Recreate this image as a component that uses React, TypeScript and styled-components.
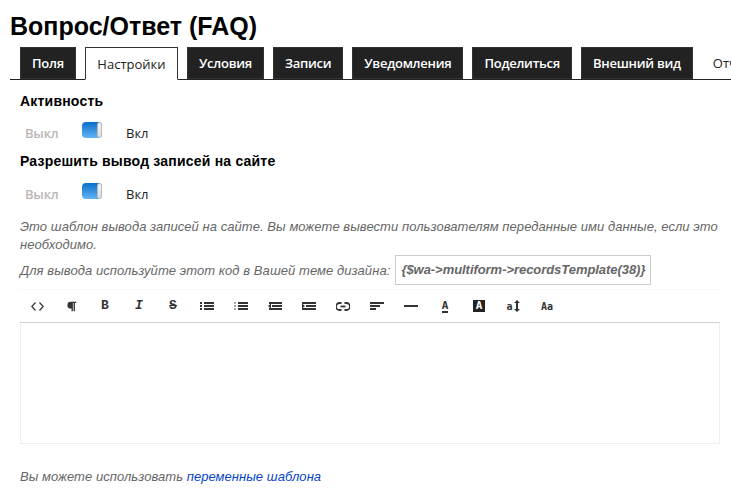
import React, { FC } from 'react';
import styled, { createGlobalStyle } from 'styled-components';
import { FaParagraph } from 'react-icons/fa';

const GlobalStyle = createGlobalStyle`
  html, body {
    margin: 0;
    padding: 0;
    background: #fff;
    overflow: hidden;
  }
  body {
    font-family: "Liberation Sans", Arial, sans-serif;
    color: #000;
  }
`;

const tabs = ['Поля', 'Настройки', 'Условия', 'Записи', 'Уведомления', 'Поделиться', 'Внешний вид'];

const Line: FC<{ x: number; y: number; w: number; h?: number }> = ({ x, y, w, h = 2 }) => (
  <rect x={x} y={y} width={w} height={h} />
);

const ListUlIcon = () => (
  <svg width="14" height="8" viewBox="0 0 14 8" fill="#333">
    <Line x={0} y={0} w={2} />
    <Line x={0} y={3} w={2} />
    <Line x={0} y={6} w={2} />
    <Line x={4} y={0} w={10} />
    <Line x={4} y={3} w={10} />
    <Line x={4} y={6} w={10} />
  </svg>
);

const ListOlIcon = () => (
  <svg width="14" height="8" viewBox="0 0 14 8" fill="#333">
    <rect x="0" y="0" width="2" height="2" fill="#aaa" />
    <rect x="0" y="3" width="2" height="2" fill="#aaa" />
    <rect x="0" y="6" width="2" height="2" fill="#aaa" />
    <Line x={4} y={0} w={10} />
    <Line x={4} y={3} w={10} />
    <Line x={4} y={6} w={10} />
  </svg>
);

const OutdentIcon = () => (
  <svg width="14" height="8" viewBox="0 0 14 8" fill="#333">
    <Line x={1} y={0} w={13} />
    <path d="M0 4l3-2.500v5z" />
    <Line x={4} y={3} w={10} />
    <Line x={1} y={6} w={13} />
  </svg>
);

const IndentIcon = () => (
  <svg width="14" height="8" viewBox="0 0 14 8" fill="#333">
    <Line x={0} y={0} w={14} />
    <path d="M3 4L0 1.500v5z" />
    <Line x={4} y={3} w={10} />
    <Line x={0} y={6} w={14} />
  </svg>
);

const LinkIcon = () => (
  <svg width="14" height="9" viewBox="0 0 14 9" fill="none" stroke="#333" strokeWidth="1.8">
    <path d="M5.500 1H3.500a3.500 3.500 0 0 0 0 7h2" />
    <path d="M8.500 1h2a3.500 3.500 0 0 1 0 7h-2" />
    <path d="M4.500 4.500h5" />
  </svg>
);

const AlignIcon = () => (
  <svg width="14" height="8" viewBox="0 0 14 8" fill="#333">
    <Line x={0} y={0} w={14} />
    <Line x={0} y={3} w={10} />
    <Line x={0} y={6} w={6} />
  </svg>
);

const RuleIcon = () => (
  <svg width="14" height="2" viewBox="0 0 14 2" fill="#333">
    <Line x={0} y={0} w={14} />
  </svg>
);

const CodeIcon = () => (
  <svg width="13" height="9" viewBox="0 0 13 9" fill="none" stroke="#333" strokeWidth="1.2">
    <path d="M4.500 0.500L0.800 4.500l3.700 4" />
    <path d="M8.500 0.500l3.700 4-3.700 4" />
  </svg>
);

const SizeArrow = () => (
  <svg width="6" height="12" viewBox="0 0 6 12" fill="#333">
    <path d="M3 0l3 3H4v6h2l-3 3-3-3h2V3H0z" />
  </svg>
);

export default function App() {
  return (
    <>
      <GlobalStyle />
      <SPage>
        <STitle>Вопрос/Ответ (FAQ)</STitle>
        <STabBar>
          {tabs.map((tab, i) => (
            <STab key={tab} $active={i === 1}>
              {tab}
            </STab>
          ))}
          <SPlainTab>Отчеты</SPlainTab>
        </STabBar>
        <SContent>
          <SHeading $top={13}>Активность</SHeading>
          <SToggleRow $top={13}>
            <SOff>Выкл</SOff>
            <SToggle />
            <SOn>Вкл</SOn>
          </SToggleRow>
          <SHeading $top={15}>Разрешить вывод записей на сайте</SHeading>
          <SToggleRow $top={14}>
            <SOff>Выкл</SOff>
            <SToggle />
            <SOn>Вкл</SOn>
          </SToggleRow>
          <SHint>
            Это шаблон вывода записей на сайте. Вы можете вывести пользователям переданные ими данные, если это
            необходимо.
          </SHint>
          <SCodeRow>
            Для вывода используйте этот код в Вашей теме дизайна:
            <SCode>{'{$wa->multiform->recordsTemplate(38)}'}</SCode>
          </SCodeRow>
          <SToolbar>
            <SToolButton><CodeIcon /></SToolButton>
            <SToolButton><FaParagraph size={11} color="#333" /></SToolButton>
            <SToolButton><SLetter>B</SLetter></SToolButton>
            <SToolButton><SLetter $italic>I</SLetter></SToolButton>
            <SToolButton><SLetter $strike>S</SLetter></SToolButton>
            <SToolButton><ListUlIcon /></SToolButton>
            <SToolButton><ListOlIcon /></SToolButton>
            <SToolButton><OutdentIcon /></SToolButton>
            <SToolButton><IndentIcon /></SToolButton>
            <SToolButton><LinkIcon /></SToolButton>
            <SToolButton><AlignIcon /></SToolButton>
            <SToolButton><RuleIcon /></SToolButton>
            <SToolButton><SUnderlined>A</SUnderlined></SToolButton>
            <SToolButton><SInverse>A</SInverse></SToolButton>
            <SToolButton><SSmall>a</SSmall><SizeArrow /></SToolButton>
            <SToolButton><SSmall>Aa</SSmall></SToolButton>
          </SToolbar>
          <SEditor />
          <SFooter>
            Вы можете использовать <SLink href="#">переменные шаблона</SLink>
          </SFooter>
        </SContent>
      </SPage>
    </>
  );
}

const SPage = styled.div`
  width: 731px;
  height: 490px;
  overflow: hidden;
  padding: 12px 0 0 10px;
  box-sizing: border-box;
`;

const STitle = styled.h1`
  margin: 0;
  font-size: 25px;
  line-height: 28px;
  font-weight: bold;
`;

const STabBar = styled.div`
  display: flex;
  gap: 9px;
  height: 33px;
  margin-top: 7px;
  padding-left: 10px;
  border-bottom: 1px solid #222;
  box-sizing: border-box;
  white-space: nowrap;
`;

const STab = styled.div<{ $active?: boolean }>`
  display: flex;
  align-items: center;
  height: ${({ $active }) => ($active ? '33px' : '32px')};
  padding: 0 ${({ $active }) => ($active ? '11.5px' : '11px')};
  box-sizing: border-box;
  font-family: "Open Sans", sans-serif;
  font-size: 13px;
  font-weight: ${({ $active }) => ($active ? 400 : 600)};
  letter-spacing: ${({ $active }) => ($active ? '0' : '-0.26px')};
  color: ${({ $active }) => ($active ? '#222' : '#fff')};
  background: ${({ $active }) => ($active ? '#fff' : '#222')};
  border: 1px solid #333;
  border-bottom: ${({ $active }) => ($active ? '1px solid #fff' : '1px solid #333')};
`;

const SPlainTab = styled.div`
  display: flex;
  align-items: center;
  height: 32px;
  padding-left: 11px;
  font-family: "Open Sans", sans-serif;
  font-size: 13px;
  color: #222;
`;

const SContent = styled.div`
  width: 700px;
  margin-left: 10px;
`;

const SHeading = styled.div<{ $top: number }>`
  margin-top: ${({ $top }) => $top}px;
  font-size: 14px;
  line-height: 16px;
  font-weight: bold;
  letter-spacing: 0.2px;
`;

const SToggleRow = styled.div<{ $top: number }>`
  display: flex;
  align-items: flex-start;
  height: 16px;
  margin-top: ${({ $top }) => $top}px;
  padding-left: 5px;
  font-family: "Open Sans", sans-serif;
  font-size: 13px;
  line-height: 16px;
`;

const SOff = styled.span`
  width: 57px;
  padding-top: 3px;
  font-weight: 600;
  letter-spacing: -0.2px;
  color: #bbb6b6;
`;

const SOn = styled.span`
  margin-left: 24px;
  padding-top: 3px;
  color: #222;
`;

const SToggle = styled.div`
  position: relative;
  width: 20px;
  height: 16px;
  border-radius: 4px;
  background: linear-gradient(#0a6fcb, #63b3f5);
  &::after {
    content: '';
    position: absolute;
    top: 0;
    right: 0;
    width: 3px;
    height: 14px;
    border: 1px solid #bbb;
    border-radius: 3px;
    background: linear-gradient(#f4f4f4, #ddd);
  }
`;

const SHint = styled.div`
  margin-top: 19px;
  font-size: 13px;
  line-height: 18px;
  font-style: italic;
  letter-spacing: 0.06px;
  color: #666;
`;

const SCodeRow = styled.div`
  display: flex;
  align-items: center;
  gap: 5px;
  margin-top: 1px;
  font-size: 13px;
  font-style: italic;
  letter-spacing: 0.07px;
  color: #666;
`;

const SCode = styled.span`
  display: block;
  padding: 0 5px;
  height: 30px;
  line-height: 28px;
  box-sizing: border-box;
  border: 1px solid #ccc;
  font-weight: bold;
  letter-spacing: -0.05px;
`;

const SToolbar = styled.div`
  display: flex;
  align-items: center;
  height: 34px;
  margin-top: 4px;
  border-top: 1px solid #f8f8f8;
  border-bottom: 1px solid #d4d4d4;
  box-sizing: border-box;
`;

const SToolButton = styled.div`
  display: flex;
  align-items: center;
  justify-content: center;
  flex: none;
  width: 34px;
  gap: 1px;
`;

const SLetter = styled.span<{ $italic?: boolean; $strike?: boolean }>`
  font-family: "Liberation Mono", monospace;
  font-size: 13px;
  font-weight: bold;
  line-height: 14px;
  color: #333;
  font-style: ${({ $italic }) => ($italic ? 'italic' : 'normal')};
  text-decoration: ${({ $strike }) => ($strike ? 'line-through' : 'none')};
`;

const SUnderlined = styled.span`
  font-family: "DejaVu Sans Mono", monospace;
  font-size: 11px;
  font-weight: bold;
  line-height: 11px;
  color: #333;
  border-bottom: 2px solid #333;
`;

const SInverse = styled.span`
  display: block;
  width: 12px;
  height: 12px;
  line-height: 12px;
  text-align: center;
  background: #222;
  color: #fff;
  font-family: "DejaVu Sans Mono", monospace;
  font-size: 11px;
  font-weight: bold;
`;

const SSmall = styled.span`
  font-family: "DejaVu Sans Mono", monospace;
  font-size: 10px;
  font-weight: bold;
  color: #333;
`;

const SEditor = styled.div`
  height: 121px;
  border: 1px solid #eee;
  border-top: none;
  box-sizing: border-box;
`;

const SFooter = styled.div`
  margin-top: 25px;
  font-size: 13px;
  line-height: 16px;
  font-style: italic;
  letter-spacing: 0.05px;
  color: #666;
`;

const SLink = styled.a`
  color: #0645c8;
  text-decoration: none;
`;
